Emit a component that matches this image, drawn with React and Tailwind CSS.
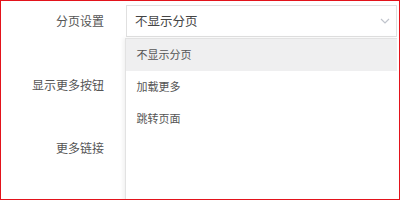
import React from 'react';

const FONT = { fontFamily: '"Noto Sans CJK SC", "Noto Sans", sans-serif' };

function ChevronDown() {
  return (
    <svg width="10" height="6" viewBox="0 0 10 6" fill="none" className="text-[#c0c4cc]">
      <path d="M1 1l4 4 4-4" stroke="currentColor" strokeWidth="1.2" />
    </svg>
  );
}

const OPTIONS = ['不显示分页', '加载更多', '跳转页面'];

export default function App() {
  return (
    <div className="w-[400px] h-[200px] bg-white border-[1.5px] border-[#e3131b] relative overflow-hidden" style={FONT}>
      <div className="flex flex-col pt-[4px]">
        <div className="flex items-center h-[32px]">
          <div className="w-[103px] text-right text-[12px] text-[#555]">分页设置</div>
          <div className="ml-[22px] flex-1 mr-[2px] h-[32px] border border-[#e0e0e0] flex items-center justify-between pl-[8px] pr-[6px]">
            <span className="text-[12.5px] text-[#444]">不显示分页</span>
            <ChevronDown />
          </div>
        </div>
        <div className="flex items-center h-[32px] mt-[32px]">
          <div className="w-[103px] text-right text-[12px] text-[#555]">显示更多按钮</div>
        </div>
        <div className="flex items-center h-[32px] mt-[31px]">
          <div className="w-[103px] text-right text-[12px] text-[#555]">更多链接</div>
        </div>
      </div>

      <div className="absolute left-[123.5px] right-[2px] top-[36.5px] h-[200px] bg-white border-l border-t border-[#e2e2e2] shadow-[-2px_0_4px_rgba(0,0,0,0.06)]">
        {OPTIONS.map((o, i) => (
          <div
            key={o}
            className={`h-[32px] flex items-center pl-[11px] text-[11px] text-[#555] ${i === 0 ? 'bg-[#efeff0] text-[#333]' : ''}`}
          >
            {o}
          </div>
        ))}
      </div>
    </div>
  );
}
